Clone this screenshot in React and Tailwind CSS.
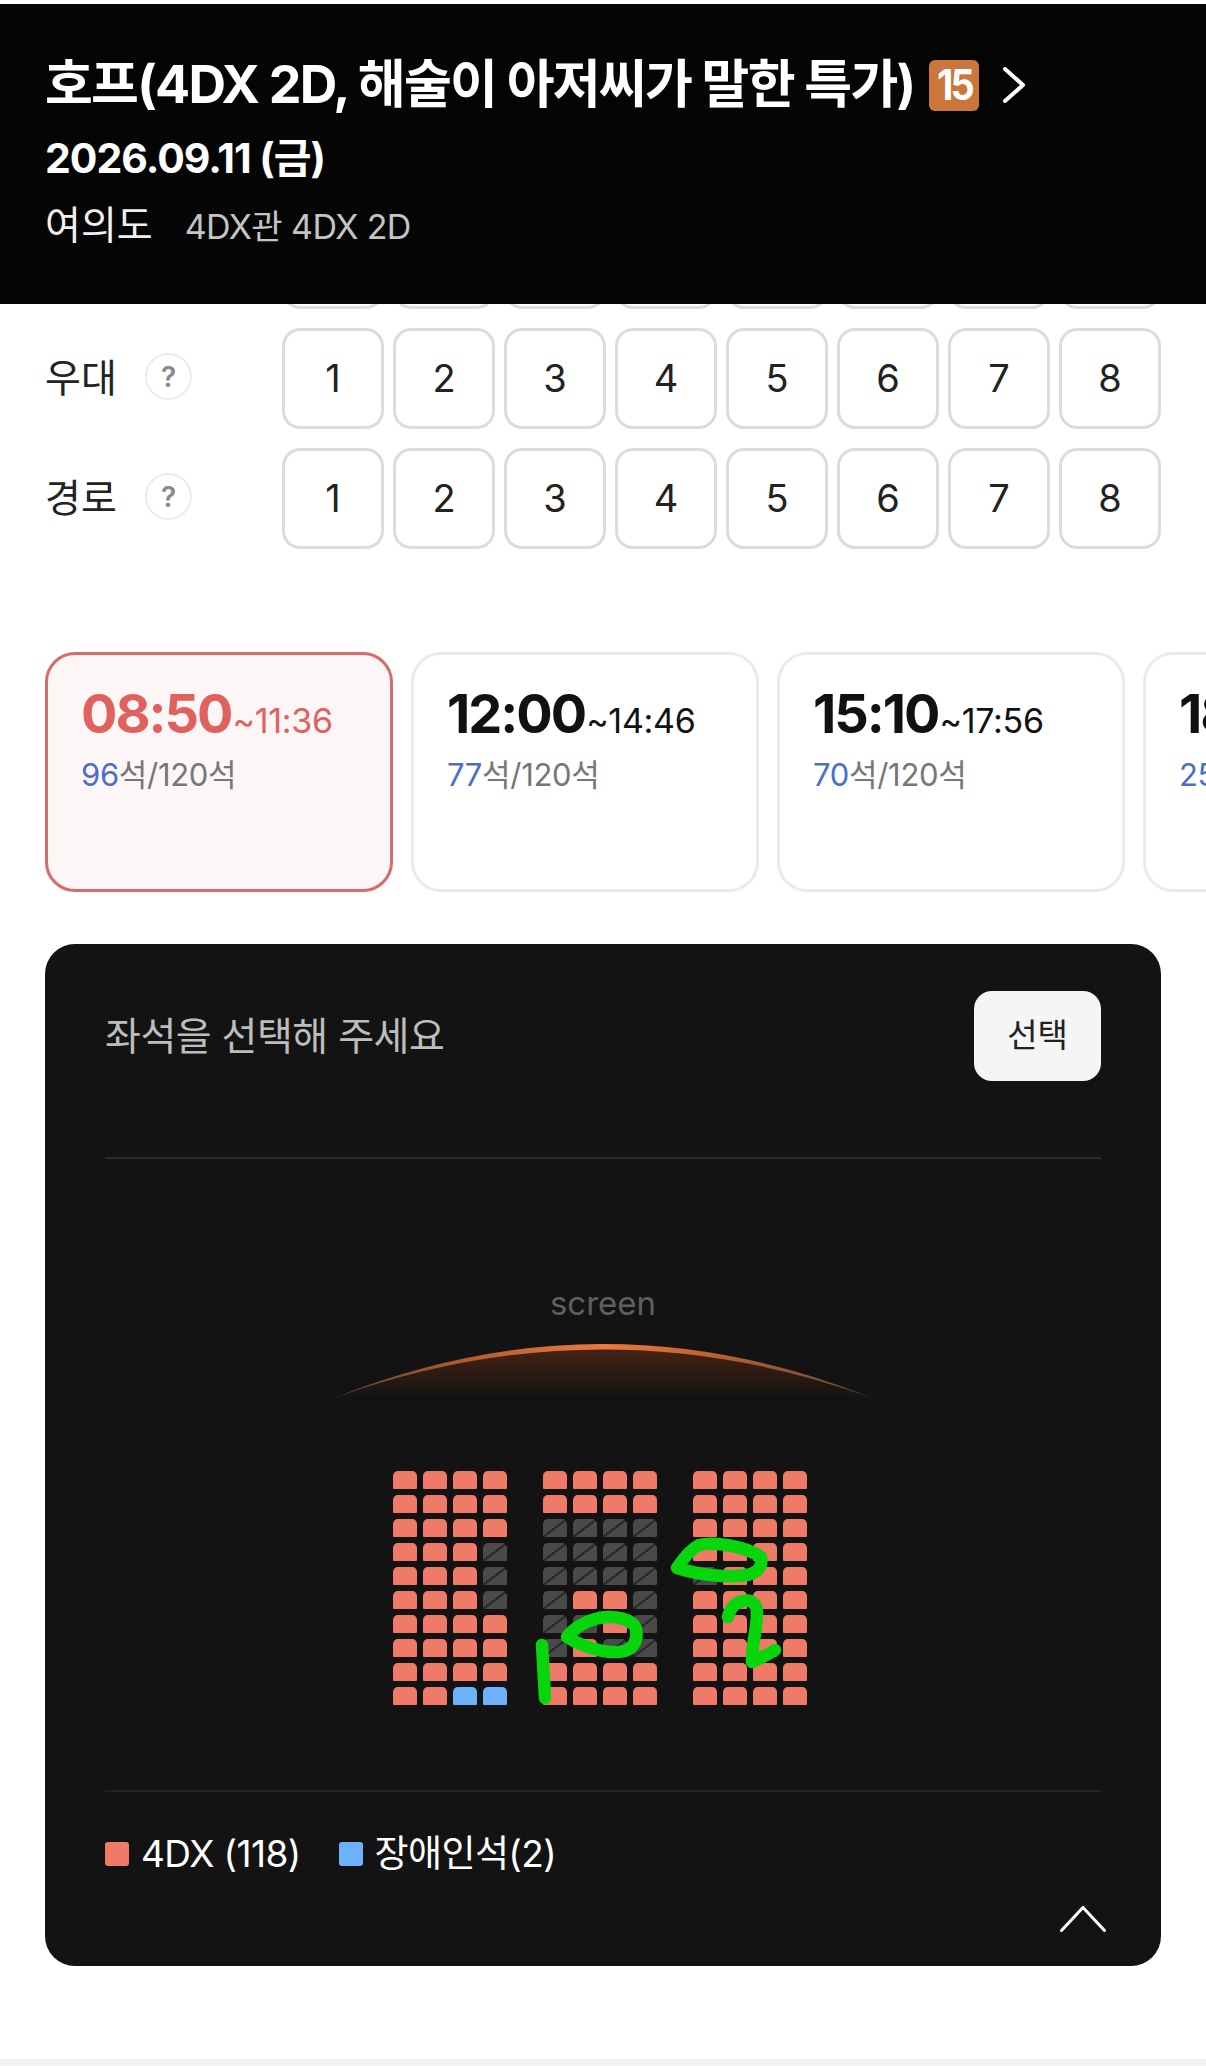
import React from "react";

const R = "r";
const G = "g";
const B = "b";

// seat map, one array per block
const fullRow = [R, R, R, R];
const grayRow = [G, G, G, G];
const blocks = [
  [fullRow, fullRow, fullRow, [R, R, R, G], [R, R, R, G], [R, R, R, G], fullRow, fullRow, fullRow, [R, R, B, B]],
  [fullRow, fullRow, grayRow, grayRow, grayRow, [G, R, R, G], [G, G, R, G], [G, R, G, G], fullRow, fullRow],
  [fullRow, fullRow, fullRow, fullRow, [G, R, R, R], fullRow, fullRow, fullRow, fullRow, fullRow],
];

const times = [
  { start: "08:50", end: "~11:36", left: "96", active: true },
  { start: "12:00", end: "~14:46", left: "77" },
  { start: "15:10", end: "~17:56", left: "70" },
  { start: "18:20", end: "~21:06", left: "25" },
];

const Seat = ({ type }) => {
  if (type === R) return <div className="w-[24px] h-[18px] rounded-t-[5px] rounded-b-[1px] bg-[#f07a68]" />;
  if (type === B) return <div className="w-[24px] h-[18px] rounded-t-[5px] rounded-b-[1px] bg-[#6db1fb]" />;
  return (
    <div className="w-[24px] h-[18px] rounded-t-[5px] rounded-b-[1px] bg-[linear-gradient(to_bottom_right,#4a4a4a_46%,#2c2c2c_46%,#2c2c2c_54%,#4a4a4a_54%)]" />
  );
};

const NumberRow = ({ label, help }) => (
  <div className="flex items-center h-[101px]">
    {label && (
      <div className="w-[237px] flex items-center">
        <span className="w-[100px] text-[39px] leading-none text-[#222] -mt-[2px]">{label}</span>
        {help && (
          <span className="w-[47px] h-[47px] rounded-full border-2 border-[#ececec] flex items-center justify-center text-[28px] font-semibold text-[#888] -mt-[4px]">
            ?
          </span>
        )}
      </div>
    )}
    {!label && <div className="w-[237px]" />}
    <div className="flex gap-[9px]">
      {[1, 2, 3, 4, 5, 6, 7, 8].map((n) => (
        <div
          key={n}
          className="w-[102px] h-[101px] rounded-[18px] border-[3px] border-[#dcdcdc] flex items-center justify-center text-[38px] text-[#222]"
        >
          {n}
        </div>
      ))}
    </div>
  </div>
);

const TimeCard = ({ start, end, left, active }) => (
  <div
    className={
      active
        ? "shrink-0 w-[348px] h-[240px] rounded-[30px] border-[3px] border-[#d96b6b] bg-[#fdf6f6] pl-[33px] pt-[27px]"
        : "shrink-0 w-[348px] h-[240px] rounded-[30px] border-[3px] border-[#ebebeb] bg-white pl-[33px] pt-[27px]"
    }
  >
    <div className={active ? "flex items-baseline text-[#e0625f]" : "flex items-baseline text-[#111]"}>
      <span className="text-[54px] leading-[64px] font-bold tracking-[-2px]">{start}</span>
      <span className="text-[34px] leading-[62px] ml-[1px] tracking-[-0.3px]">{end}</span>
    </div>
    <div className="text-[31px] leading-[46px] text-[#777] tracking-[-0.3px]">
      <span className="text-[#4a6fc8]">{left}</span>석/120석
    </div>
  </div>
);

export default function App() {
  return (
    <div className="w-[1206px] h-[2066px] overflow-hidden bg-white pt-[4px] flex flex-col font-['Inter','Noto_Sans_CJK_KR',sans-serif]">
      {/* sticky header, the row behind it pokes out a little */}
      <div className="relative z-10 shrink-0 h-[300px] bg-[#050505] pl-[45px] pt-[51px] text-white">
        <div className="flex items-center h-[60px]">
          <span className="text-[52px] leading-[60px] font-bold tracking-[-1.75px] whitespace-nowrap">
            호프(4DX 2D, 해술이 아저씨가 말한 특가)
          </span>
          <span className="ml-[15px] w-[50px] h-[51px] rounded-[6px] bg-[#c9773a] flex items-center justify-center">
            <span className="text-[42px] leading-none font-bold scale-x-90 tracking-[-3px]">15</span>
          </span>
          <svg className="ml-[24px]" width="22" height="36" viewBox="0 0 22 36" fill="none">
            <path d="M2 2 L20 18 L2 34" stroke="white" strokeWidth="4" strokeLinecap="round" strokeLinejoin="round" />
          </svg>
        </div>
        <div className="mt-[19px] text-[41px] leading-[48px] font-bold tracking-[-1px]">2026.09.11 (금)</div>
        <div className="mt-[20px] flex items-baseline">
          <span className="text-[39px] leading-[46px] text-[#f0f0f0]">여의도</span>
          <span className="ml-[32px] text-[34px] leading-[46px] text-[#c4c4c4] tracking-[-0.6px]">4DX관 4DX 2D</span>
        </div>
      </div>

      <div className="-mt-[96px] pl-[45px] flex flex-col gap-[19px]">
        <NumberRow />
        <NumberRow label="우대" help />
        <NumberRow label="경로" help />
      </div>

      <div className="mt-[103px] pl-[45px] flex gap-[18px] overflow-hidden">
        {times.map((t) => (
          <TimeCard key={t.start} {...t} />
        ))}
      </div>

      <div className="mt-[52px] mx-[45px] w-[1116px] h-[1022px] shrink-0 rounded-[30px] bg-[#131313] px-[60px] pt-[47px]">
        <div className="flex items-center justify-between">
          <span className="text-[39px] text-[#bdbdbd] tracking-[-0.5px]">좌석을 선택해 주세요</span>
          <div className="w-[127px] h-[90px] rounded-[18px] bg-[#f5f5f5] flex items-center justify-center text-[33px] text-[#222]">
            선택
          </div>
        </div>
        <div className="mt-[76px] h-[2px] bg-[#2b2b2b]" />

        <div className="mt-[124px] text-center text-[33px] leading-[40px] text-[#5f5f5f]">screen</div>

        <svg className="block ml-[228px] mt-[21px]" width="540" height="60" viewBox="0 0 540 60" fill="none">
          <defs>
            <linearGradient id="arcGlow" x1="0" y1="0" x2="0" y2="1">
              <stop offset="0" stopColor="#4a2412" />
              <stop offset="1" stopColor="#131313" />
            </linearGradient>
            <linearGradient id="arcLine" x1="0" y1="0" x2="1" y2="0">
              <stop offset="0" stopColor="#5a4a40" />
              <stop offset="0.25" stopColor="#b05c30" />
              <stop offset="0.5" stopColor="#ec7a3c" />
              <stop offset="0.75" stopColor="#b05c30" />
              <stop offset="1" stopColor="#5a4a40" />
            </linearGradient>
          </defs>
          <path d="M1 54 Q270 -54 539 54 Z" fill="url(#arcGlow)" />
          <path d="M1 54 Q270 -54 539 54 Q270 -43 1 54 Z" fill="url(#arcLine)" />
        </svg>

        <div className="relative w-[414px] ml-[288px] mt-[67px] flex gap-[36px]">
          {blocks.map((rows, b) => (
            <div key={b} className="flex flex-col gap-[6px]">
              {rows.map((row, r) => (
                <div key={r} className="flex gap-[6px]">
                  {row.map((type, s) => (
                    <Seat key={s} type={type} />
                  ))}
                </div>
              ))}
            </div>
          ))}
          {/* green marker scribbles on top of the seats */}
          <svg
            className="absolute left-0 top-0 overflow-visible pointer-events-none"
            width="414"
            height="234"
            viewBox="0 0 414 234"
            fill="none"
            stroke="#08d60c"
            strokeWidth="12.5"
            strokeLinecap="round"
            strokeLinejoin="round"
          >
            <path d="M149 174 L152 227" />
            <path d="M174 166 C180 158 192 150 206 147 C222 144 240 148 243 158 C245 168 242 176 232 180 C220 183 196 180 174 166 Z" />
            <path d="M284 97 C290 88 298 78 306 74 C322 70 354 76 368 86 C370 96 364 102 354 104 C334 107 306 104 284 97 Z" />
            <path d="M335 146 C337 138 342 131 350 130 C358 128 364 132 364 142 C364 160 358 176 359 191 C366 188 374 184 382 179" />
          </svg>
        </div>

        <div className="mt-[85px] h-[2px] bg-[#222]" />

        <div className="mt-[38px] flex items-center text-[37px] leading-[48px] text-white tracking-[-0.6px]">
          <span className="w-[24px] h-[24px] rounded-[3px] bg-[#f07a68] mr-[12px]" />
          <span>4DX (118)</span>
          <span className="w-[24px] h-[24px] rounded-[3px] bg-[#6db1fb] ml-[38px] mr-[12px]" />
          <span>장애인석(2)</span>
        </div>

        <div className="mt-[28px] flex justify-end -mr-[5px]">
          <svg width="46" height="26" viewBox="0 0 46 26" fill="none">
            <path d="M1.5 24.5 L23 1.5 L44.5 24.5" stroke="white" strokeWidth="3" strokeLinecap="round" strokeLinejoin="round" />
          </svg>
        </div>
      </div>

      <div className="mt-auto h-[7px] bg-[#f3f3f3]" />
    </div>
  );
}
